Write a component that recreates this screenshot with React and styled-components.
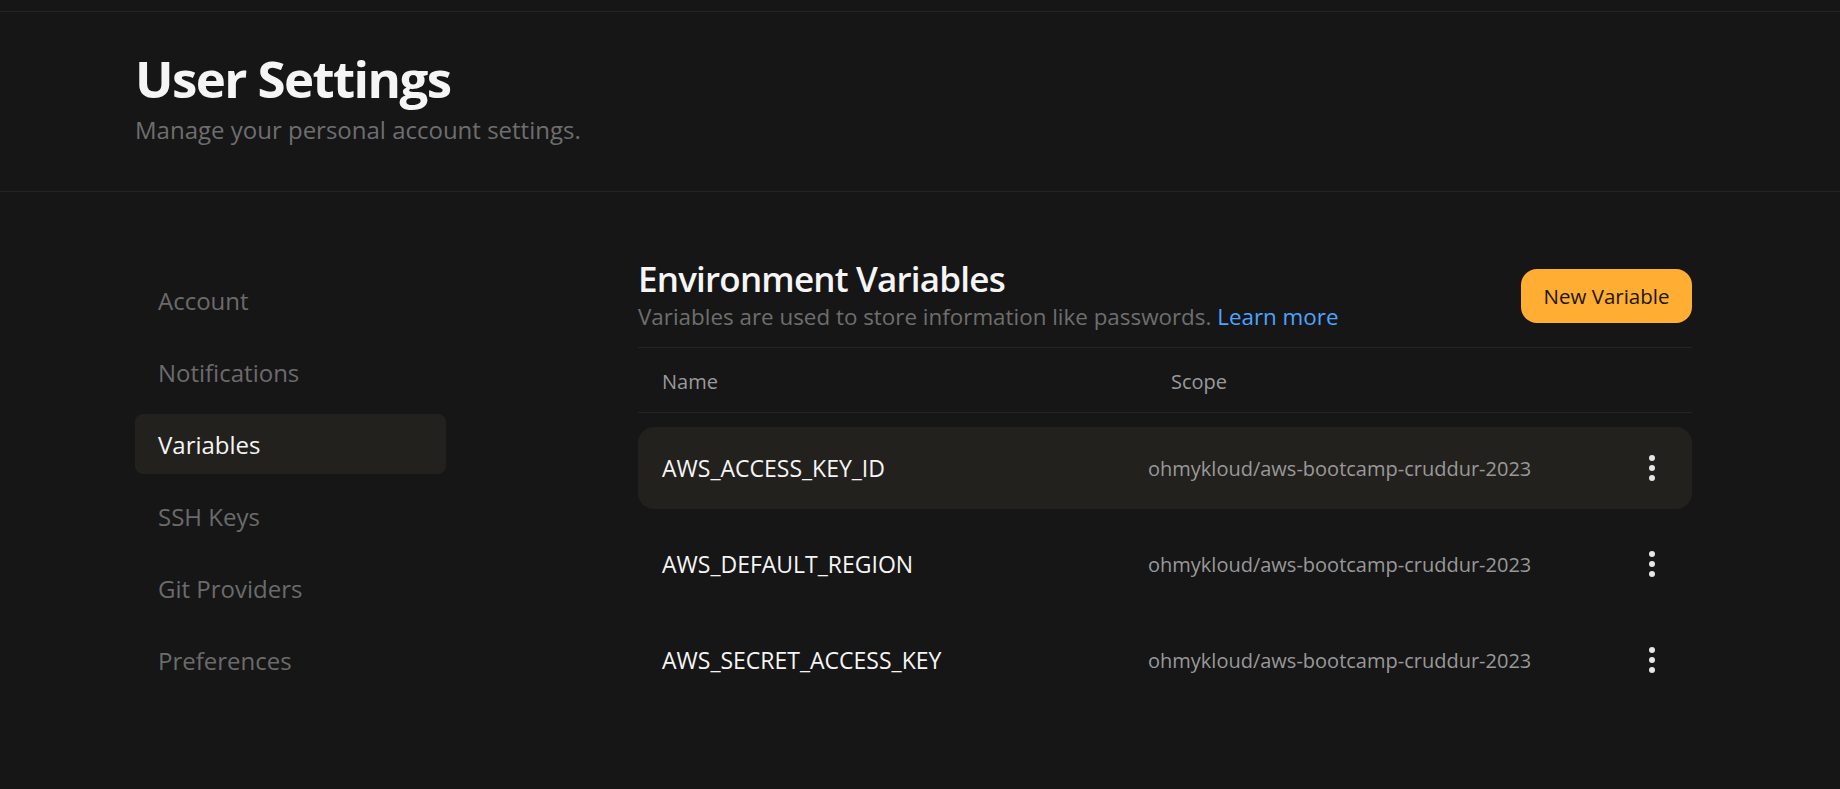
import React from "react";
import styled, { createGlobalStyle } from "styled-components";

const GlobalStyle = createGlobalStyle`
  html, body {
    margin: 0;
    padding: 0;
    background: #161616;
  }
  body {
    font-family: "Open Sans", "Noto Sans", sans-serif;
    color: #f2f2f2;
  }
`;

const navItems = [
  "Account",
  "Notifications",
  "Variables",
  "SSH Keys",
  "Git Providers",
  "Preferences",
];

const variables = [
  { name: "AWS_ACCESS_KEY_ID", scope: "ohmykloud/aws-bootcamp-cruddur-2023" },
  { name: "AWS_DEFAULT_REGION", scope: "ohmykloud/aws-bootcamp-cruddur-2023" },
  { name: "AWS_SECRET_ACCESS_KEY", scope: "ohmykloud/aws-bootcamp-cruddur-2023" },
];

function KebabIcon() {
  return (
    <svg width="8" height="28" viewBox="0 0 8 28">
      <circle cx="4" cy="4" r="3" fill="#e6e6e6" />
      <circle cx="4" cy="14" r="3" fill="#e6e6e6" />
      <circle cx="4" cy="24" r="3" fill="#e6e6e6" />
    </svg>
  );
}

function App() {
  return (
    <>
      <GlobalStyle />
      <Page>
        <TopBar />
        <Header>
          <Title>User Settings</Title>
          <Subtitle>Manage your personal account settings.</Subtitle>
        </Header>
        <Body>
          <Sidebar>
            {navItems.map((item) => (
              <NavItem key={item} $active={item === "Variables"}>
                {item}
              </NavItem>
            ))}
          </Sidebar>
          <Content>
            <SectionHead>
              <div>
                <SectionTitle>Environment Variables</SectionTitle>
                <SectionText>
                  Variables are used to store information like passwords.{" "}
                  <Link href="#">Learn more</Link>
                </SectionText>
              </div>
              <PrimaryButton>New Variable</PrimaryButton>
            </SectionHead>
            <TableHead>
              <NameCell>Name</NameCell>
              <HeadScope>Scope</HeadScope>
            </TableHead>
            <Rows>
              {variables.map((v, i) => (
                <Row key={v.name} $active={i === 0}>
                  <VarName>{v.name}</VarName>
                  <Scope>{v.scope}</Scope>
                  <MenuButton>
                    <KebabIcon />
                  </MenuButton>
                </Row>
              ))}
            </Rows>
          </Content>
        </Body>
      </Page>
    </>
  );
}

const Page = styled.div`
  min-height: 789px;
  background: #161616;
`;

const TopBar = styled.div`
  height: 11px;
  border-bottom: 1px solid #242424;
`;

const Header = styled.div`
  height: 180px;
  box-sizing: border-box;
  padding: 38px 135px 0;
  border-bottom: 1px solid #242424;
`;

const Title = styled.h1`
  margin: 0;
  font-size: 51px;
  font-weight: 700;
  letter-spacing: -1.6px;
  line-height: 56px;
  color: #f5f5f5;
`;

const Subtitle = styled.p`
  margin: 10px 0 0;
  font-size: 24px;
  line-height: 28px;
  color: #6e6e6e;
`;

const Body = styled.div`
  display: flex;
  gap: 192px;
  padding: 61px 0 0 135px;
`;

const Sidebar = styled.nav`
  width: 311px;
  display: flex;
  flex-direction: column;
  gap: 12px;
  padding-top: 17px;
`;

const NavItem = styled.div`
  height: 60px;
  display: flex;
  align-items: center;
  padding-left: 23px;
  border-radius: 8px;
  font-size: 24px;
  color: ${(p) => (p.$active ? "#f5f5f5" : "#6b6b6b")};
  background: ${(p) => (p.$active ? "#23211e" : "transparent")};
`;

const Content = styled.div`
  width: 1054px;
  padding-top: 3px;
`;

const SectionHead = styled.div`
  display: flex;
  justify-content: space-between;
  align-items: flex-start;
  padding-bottom: 15px;
  border-bottom: 1px solid #242424;
`;

const SectionTitle = styled.h2`
  margin: 0;
  font-size: 35px;
  font-weight: 600;
  letter-spacing: -0.8px;
  line-height: 46px;
  color: #f5f5f5;
`;

const SectionText = styled.p`
  margin: 0;
  font-size: 22.4px;
  line-height: 30px;
  color: #6e6e6e;
`;

const Link = styled.a`
  color: #4ea3ff;
  text-decoration: none;
`;

const PrimaryButton = styled.button`
  margin-top: 13px;
  width: 171px;
  height: 54px;
  border: none;
  border-radius: 16px;
  background: #ffad33;
  color: #1c1608;
  font-family: inherit;
  font-size: 20.5px;
  font-weight: 500;
  cursor: pointer;
`;

const TableHead = styled.div`
  display: flex;
  align-items: center;
  height: 65px;
  padding-left: 24px;
  padding-top: 2px;
  box-sizing: border-box;
  border-bottom: 1px solid #242424;
  font-size: 20px;
  color: #9a9a9a;
`;

const NameCell = styled.div`
  width: 509px;
`;

const HeadScope = styled.div``;

const Rows = styled.div`
  display: flex;
  flex-direction: column;
  gap: 14px;
  padding-top: 14px;
`;

const Row = styled.div`
  display: flex;
  align-items: center;
  height: 82px;
  padding: 0 36px 0 24px;
  border-radius: 16px;
  background: ${(p) => (p.$active ? "#23211e" : "transparent")};
`;

const VarName = styled.div`
  width: 486px;
  font-size: 23px;
  color: #f5f5f5;
`;

const Scope = styled.div`
  flex: 1;
  font-size: 20px;
  color: #999999;
`;

const MenuButton = styled.div`
  display: flex;
  align-items: center;
`;

export default App;
